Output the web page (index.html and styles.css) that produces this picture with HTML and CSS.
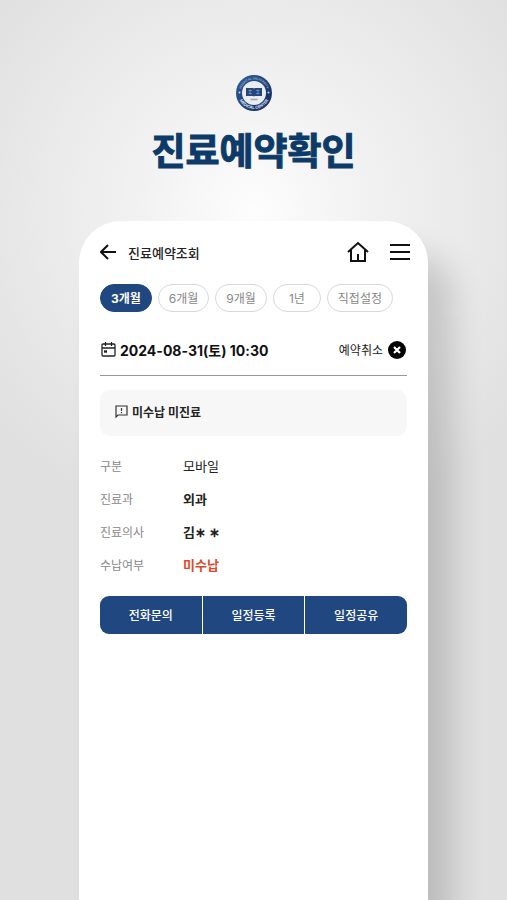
FILE: index.html
```html
<!DOCTYPE html>
<html lang="ko">
    <head>
        <meta charset="utf-8" />
        <meta name="viewport" content="width=device-width, initial-scale=1" />
        <title>진료예약확인</title>
        <link rel="stylesheet" href="styles.css">
    </head>
    <body>
        <header class="intro">
            <svg class="emblem" viewBox="0 0 72 72" aria-hidden="true">
                <defs>
                    <linearGradient id="ring" x1="0" y1="0" x2="1" y2="1">
                        <stop offset="0" stop-color="#2f6099" />
                        <stop offset="1" stop-color="#16265c" />
                    </linearGradient>
                    <path id="arc-top" d="M9 36a27 27 0 0 1 54 0" />
                    <path id="arc-bottom" d="M4 36a32 32 0 0 0 64 0" />
                </defs>
                <circle cx="36" cy="36" r="36" fill="url(#ring)" />
                <circle cx="36" cy="36" r="24" fill="#e9edf0" />
                <text class="emblem-text"><textPath href="#arc-top" startOffset="50%">HOSPITAL UNIVERSITY</textPath></text>
                <text class="emblem-text emblem-text-bottom"><textPath href="#arc-bottom" startOffset="50%">MEDICAL CENTER</textPath></text>
                <circle cx="7" cy="35" r="2" fill="#cbd8e8" />
                <circle cx="65" cy="35" r="2" fill="#cbd8e8" />
                <path d="M20 26h14l2 1 2-1h14v16H38l-2 1-2-1H20z" fill="#25477d" />
                <path d="M25 31h7M25 37h7M28 29v10M40 31h7M40 37h7M44 29v10" stroke="#7d97bb" stroke-width="1.500" />
                <path d="M29 49h14" stroke="#9aa5b3" stroke-width="3" />
            </svg>
            <h1>진료예약확인</h1>
        </header>

        <main class="phone">
            <nav class="topbar">
                <button type="button" class="icon-btn" aria-label="뒤로">
                    <svg width="16" height="18" viewBox="0 0 16 18"><path d="M8 2 1 9l7 7M1 9h15" /></svg>
                </button>
                <h2>진료예약조회</h2>
                <button type="button" class="icon-btn home" aria-label="홈">
                    <svg width="22" height="22" viewBox="0 0 22 22"><path d="M1 11 11 2l10 9M4 9v11h14V9M11 20v-7" /></svg>
                </button>
                <button type="button" class="icon-btn" aria-label="메뉴">
                    <svg width="20" height="18" viewBox="0 0 20 18"><path d="M0 2h20M0 9h20M0 16h20" /></svg>
                </button>
            </nav>

            <div class="periods">
                <button type="button" class="active">3개월</button>
                <button type="button">6개월</button>
                <button type="button">9개월</button>
                <button type="button" class="year">1년</button>
                <button type="button">직접설정</button>
            </div>

            <div class="schedule">
                <svg width="15" height="15" viewBox="0 0 15 15" fill="none" stroke="#222">
                    <rect x="1" y="2" width="13" height="12" rx="1" stroke-width="1.3" />
                    <path d="M1 6h13M4.500 0v4M10.500 0v4" stroke-width="1.3" />
                    <path d="M3 9.500h3" stroke-width="2.400" />
                </svg>
                <time datetime="2024-08-31T10:30">2024-08-31(토) 10:30</time>
                <button type="button" class="cancel">
                    예약취소
                    <svg width="18" height="18" viewBox="0 0 18 18">
                        <circle cx="9" cy="9" r="9" />
                        <path d="m6 6 6 6M12 6l-6 6" stroke="#fff" stroke-width="2.200" />
                    </svg>
                </button>
            </div>

            <p class="notice">
                <svg width="13" height="13" viewBox="0 0 13 13" fill="none" stroke="#333" stroke-width="1.200">
                    <path d="M1 12V1h11v9H3z" />
                    <path d="M6.500 3v3M6.500 7v1.300" />
                </svg>
                미수납 미진료
            </p>

            <dl class="details">
                <dt>구분</dt>
                <dd class="regular">모바일</dd>
                <dt>진료과</dt>
                <dd>외과</dd>
                <dt>진료의사</dt>
                <dd>김∗ ∗</dd>
                <dt>수납여부</dt>
                <dd class="unpaid">미수납</dd>
            </dl>

            <div class="actions">
                <button type="button">전화문의</button>
                <button type="button">일정등록</button>
                <button type="button">일정공유</button>
            </div>
        </main>
    </body>
</html>
```
FILE: styles.css
```css
* {
    box-sizing: border-box;
    margin: 0;
    padding: 0;
}

body {
    display: flex;
    flex-direction: column;
    min-height: 100vh;
    overflow-x: hidden;
    padding: 0 79px;
    font-family: Inter, "Noto Sans CJK KR", sans-serif;
    font-size: 12px;
    color: #222;
    background: #e0e0e0 radial-gradient(circle at 50% 210px, #fdfdfd 0, #f2f2f2 110px, #eaeaea 210px, #e0e0e0 330px) no-repeat;
}

button {
    font: inherit;
    color: inherit;
    background: none;
    border: none;
    cursor: pointer;
}

svg {
    display: block;
    flex: none;
}

/* 상단 로고와 제목 */
.intro {
    display: flex;
    flex-direction: column;
    align-items: center;
    padding: 75px 0 42px;
}

.emblem {
    width: 36px;
    height: 36px;
}

.emblem-text {
    font-size: 6px;
    font-weight: 700;
    fill: #8fa9cb;
    text-anchor: middle;
}

.emblem-text-bottom {
    font-size: 8px;
    fill: #dbe5f1;
}

h1 {
    margin-top: 14px;
    font-size: 37px;
    line-height: 54px;
    font-weight: 700;
    color: #0d3b69;
    -webkit-text-stroke: 1px #0d3b69;
    white-space: nowrap;
}

/* 휴대폰 화면 */
.phone {
    flex: 1;
    padding: 18px 21px 40px;
    background-color: #fff;
    border-radius: 42px 42px 0 0;
    box-shadow: 24px 32px 32px rgba(0, 0, 0, 0.16);
}

.topbar {
    display: flex;
    align-items: center;
    height: 26px;
    margin-right: -3px;
}

.icon-btn svg {
    fill: none;
    stroke: #111;
    stroke-width: 2;
}

.home {
    margin-left: auto;
    margin-right: 21px;
}

h2 {
    margin-left: 12px;
    font-size: 13px;
    font-weight: 500;
}

.periods {
    display: flex;
    gap: 6px;
    margin-top: 19px;
}

.periods button {
    height: 28px;
    padding: 0 10px 2px;
    border: 1px solid #d8d8d8;
    border-radius: 14px;
    color: #888;
    white-space: nowrap;
}

.periods .year {
    padding: 0 15px 2px;
}

.periods .active {
    color: #fff;
    font-weight: 700;
    background-color: #20477f;
    border-color: #20477f;
}

.schedule {
    display: flex;
    align-items: center;
    height: 64px;
    padding: 12px 1px 0;
    border-bottom: 1px solid #999;
}

time {
    margin-left: 4px;
    font-size: 14px;
    font-weight: 700;
    color: #111;
    white-space: nowrap;
}

.cancel {
    display: flex;
    align-items: center;
    gap: 5px;
    margin-left: auto;
    white-space: nowrap;
}

.notice {
    display: flex;
    align-items: center;
    gap: 4px;
    height: 46px;
    margin-top: 14px;
    padding: 0 15px 3px;
    font-weight: 700;
    background-color: #f7f7f7;
    border-radius: 10px;
}

.details {
    display: grid;
    grid-template-columns: 83px 1fr;
    grid-auto-rows: 33px;
    align-items: center;
    margin-top: 13px;
}

.details dt {
    color: #888;
}

.details dd {
    font-size: 13px;
    font-weight: 700;
}

.details .regular {
    font-weight: 400;
}

.details .unpaid {
    color: #e0492a;
}

.actions {
    display: flex;
    gap: 1px;
    margin-top: 15px;
    border-radius: 9px;
    overflow: hidden;
}

.actions button {
    flex: 1;
    height: 38px;
    padding-bottom: 2px;
    color: #fff;
    font-weight: 500;
    background-color: #20477f;
}
```
